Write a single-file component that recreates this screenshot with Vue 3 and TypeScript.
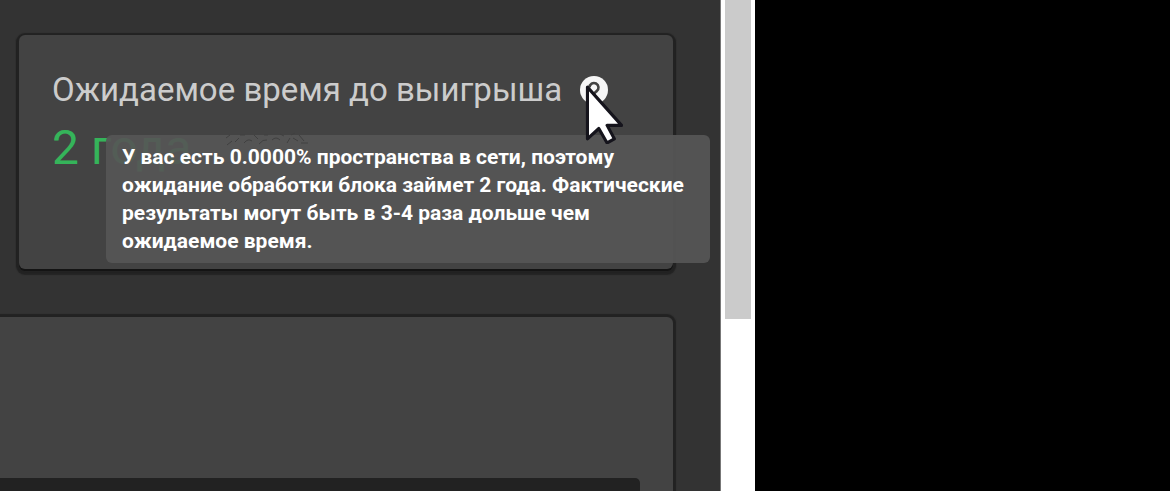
<script setup lang="ts">
import { ref } from 'vue'

const title = ref('Ожидаемое время до выигрыша')
const value = ref('2 года')
const hint = ref(
  [
    'У вас есть 0.0000% пространства в сети, поэтому',
    'ожидание обработки блока займет 2 года. Фактические',
    'результаты могут быть в 3-4 раза дольше чем',
    'ожидаемое время.',
  ].join('\n'),
)
</script>

<template>
  <div class="page">
    <main class="content">
      <section class="card estimate">
        <header class="heading">
          <h2 class="title">{{ title }}</h2>
          <button class="help" type="button" aria-label="Подсказка" aria-describedby="hint">
            <svg class="help-icon" viewBox="0 0 28 28" aria-hidden="true">
              <circle cx="14" cy="14" r="14" fill="#f6f6f6" />
              <path d="M9.500 11.500a4.500 4.500 0 1 1 7.200 3.600c-1.700 1.300-2.700 1.900-2.700 3.700" fill="none" stroke="#424242" stroke-width="2.600" />
              <circle cx="14" cy="22" r="1.500" fill="#424242" />
            </svg>
            <svg class="pointer" viewBox="0 0 36 58" aria-hidden="true">
              <path d="M2 3V53L13 43L21 57L28 53L21 40H35Z" fill="#fff" stroke="#15141c" stroke-width="3" stroke-linejoin="round" />
            </svg>
          </button>
        </header>
        <p class="value">{{ value }}</p>
        <div id="hint" class="tooltip" role="tooltip">
          <svg class="ripple" viewBox="0 0 86 16" aria-hidden="true">
            <path d="M2 6l4-3M3 13l5-4M11 10l4-4M16 3h5M20 11q4-5 8-2M30 3l4 4M35 12q4-5 8-4M40 3h4M48 8q4-4 8 0M56 2l4 2M63 11l3-5M67 3l4-2M69 6l5 3M75 3l5 6M77 11h7" fill="none" stroke="#404040" stroke-width="1" />
          </svg>
          <span class="hint-text">{{ hint }}</span>
        </div>
      </section>
      <section class="card chart">
        <div class="plot"></div>
      </section>
    </main>
    <div class="scroll-track"><div class="scroll-thumb"></div></div>
    <aside class="backdrop"></aside>
  </div>
</template>

<style>
html,
body {
  margin: 0;
  background: #000;
}
</style>

<style scoped>
.page {
  display: grid;
  grid-template-columns: minmax(0, 720fr) 35px minmax(0, 415fr);
  height: 100vh;
  overflow: hidden;
  font-family: Roboto, "Liberation Sans", sans-serif;
}
.content {
  display: flex;
  flex-direction: column;
  gap: 48px;
  box-sizing: border-box;
  min-height: 0;
  padding: 35px 47px 0 19px;
  background: #333;
}
.card {
  box-sizing: border-box;
  background: #434343;
  border-radius: 6px;
  box-shadow: 0 0 1px 3px #222;
}
.estimate {
  position: relative;
  flex: none;
  min-height: 234px;
  padding: 35px 33px;
  box-shadow: 0 2px 0 0 #141414, 0 1px 1px 3px #222, 0 3px 1px 3px #242424;
}
.heading {
  display: flex;
  align-items: center;
  gap: 18px;
  height: 40px;
}
.title {
  margin: 0;
  color: #ccc;
  font-size: 33px;
  font-weight: 400;
  line-height: 40px;
  white-space: nowrap;
}
.help {
  position: relative;
  z-index: 2;
  flex: none;
  width: 28px;
  height: 28px;
  padding: 0;
  border: 0;
  background: none;
  cursor: pointer;
}
.help-icon {
  display: block;
  width: 28px;
  height: 28px;
}
.pointer {
  position: absolute;
  top: 8px;
  left: 5px;
  width: 38px;
  height: 60px;
}
.value {
  margin: 10px 0 0;
  color: #35b45a;
  font-size: 48px;
  line-height: 56px;
}
.tooltip {
  position: absolute;
  z-index: 1;
  top: 100px;
  right: -37px;
  left: 87px;
  box-sizing: border-box;
  padding: 8px 16px;
  border-radius: 6px;
  background: rgba(86, 86, 86, 0.93);
  color: #fff;
  font-size: 21px;
  font-weight: 700;
  line-height: 28px;
}
.hint-text {
  display: block;
  white-space: pre-line;
}
.ripple {
  position: absolute;
  top: -3px;
  left: 118px;
  width: 86px;
  height: 16px;
}
.chart {
  flex: 1;
  min-height: 220px;
  margin-left: -60px;
  padding: 161px 33px 0 0;
}
.plot {
  height: 240px;
  border-radius: 5px;
  background: #222;
}
.scroll-track {
  box-sizing: border-box;
  padding: 0 4px;
  border-left: 1px solid #777;
  background: #fff;
}
.scroll-thumb {
  height: 65vh;
  background: #cbcbcb;
}
.backdrop {
  background: #000;
}
</style>
